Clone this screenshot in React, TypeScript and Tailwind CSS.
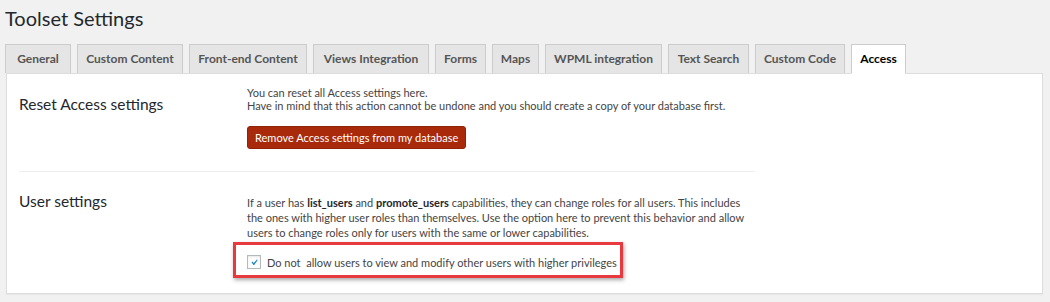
import React from "react";

const tabs: { label: string; w: string }[] = [
  { label: "General", w: "w-[66px]" },
  { label: "Custom Content", w: "w-[106px]" },
  { label: "Front-end Content", w: "w-[118px]" },
  { label: "Views Integration", w: "w-[116px]" },
  { label: "Forms", w: "w-[51px]" },
  { label: "Maps", w: "w-[47px]" },
  { label: "WPML integration", w: "w-[117px]" },
  { label: "Text Search", w: "w-[81px]" },
  { label: "Custom Code", w: "w-[90px]" },
  { label: "Access", w: "w-[55px]" },
];

export default function App() {
  return (
    <div className="w-[1050px] h-[302px] bg-[#f1f1f1] font-['Lato',sans-serif] text-[#23282d] overflow-hidden">
      <h1 className="pl-[5px] pt-[5px] text-[20px] leading-[26px] font-normal text-[#23282d]">
        Toolset Settings
      </h1>
      <div className="flex gap-[6px] pl-[5px] mt-[13px] relative z-10">
        {tabs.map((t) => {
          const active = t.label === "Access";
          return (
            <div
              key={t.label}
              className={
                (active
                  ? "h-[30px] flex items-center justify-center whitespace-nowrap text-[12px] font-bold text-black bg-white border border-[#ccc] border-b-white "
                  : "h-[29px] flex items-center justify-center whitespace-nowrap text-[12px] font-bold text-[#555] bg-[#e5e5e5] border border-[#ccc] border-b-0 ") + t.w
              }
            >
              {t.label}
            </div>
          );
        })}
      </div>
      <div className="ml-[6px] mr-[7px] -mt-px bg-white border border-[#ddd] shadow-[0_1px_1px_rgba(0,0,0,0.04)] h-[221px] px-[12px]">
        <div className="w-[736px]">
          <div className="flex pt-[12px] pb-[22px] border-b border-[#eee]">
            <div className="w-[228px] pt-[8px] text-[15.5px] leading-[20px] text-[#23282d]">
              Reset Access settings
            </div>
            <div className="flex-1 text-[11px] leading-[13px] text-[#444]">
              <p>You can reset all Access settings here.</p>
              <p>
                Have in mind that this action cannot be undone and you should create a copy of your database first.
              </p>
              <button className="mt-[14px] h-[23px] px-[7px] rounded-[3px] bg-[#a82a0a] text-white text-[11px] leading-[21px] border border-[#8e2309]">
                Remove Access settings from my database
              </button>
            </div>
          </div>
          <div className="flex pt-[19px]">
            <div className="w-[228px] text-[15.5px] leading-[20px] text-[#23282d]">User settings</div>
            <div className="flex-1 text-[11px] leading-[15px] text-[#444] pt-[4px]">
              <p>
                If a user has <b className="font-bold text-[#23282d]">list_users</b> and{" "}
                <b className="font-bold text-[#23282d]">promote_users</b> capabilities, they can change roles for all
                users. This includes the ones with higher user roles than themselves. Use the option here to prevent
                this behavior and allow users to change roles only for users with the same or lower capabilities.
              </p>
              <div className="relative mt-[14px] flex items-center gap-[6px] h-[16px]">
                <div className="absolute left-[-14px] top-[-12px] w-[390px] h-[36px] border-[3px] border-[#e8393e] shadow-[1px_2px_4px_rgba(0,0,0,0.35)]" />
                <span className="w-[14px] h-[14px] border border-[#b4b9be] bg-white shadow-[inset_0_1px_2px_rgba(0,0,0,0.1)] flex items-center justify-center">
                  <svg width="13" height="13" viewBox="0 0 20 20">
                    <path d="M14.83 4.89l1.34.94-5.81 8.38H9.02L5.78 9.67l1.34-1.25 2.57 2.4z" fill="#1e8cbe" />
                  </svg>
                </span>
                <span className="whitespace-pre">Do not  allow users to view and modify other users with higher privileges</span>
              </div>
            </div>
          </div>
        </div>
      </div>
    </div>
  );
}
